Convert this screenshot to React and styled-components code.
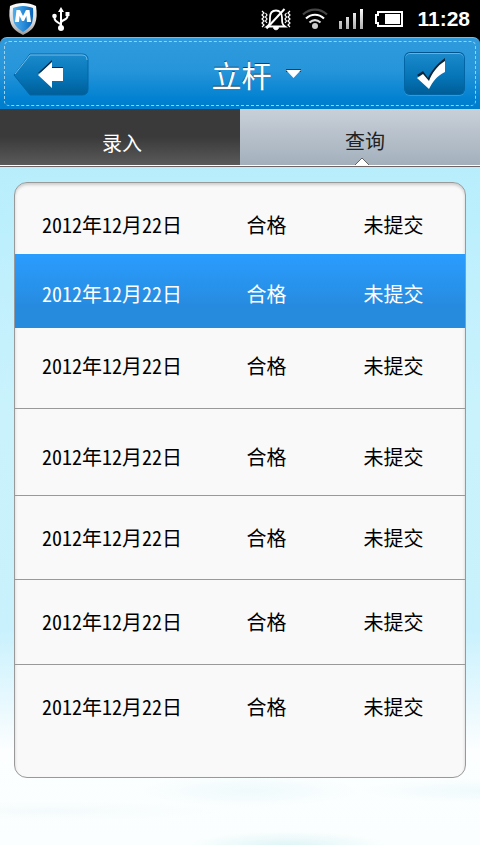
import React, { useState } from "react";
import styled, { createGlobalStyle, css } from "styled-components";

const Global = createGlobalStyle`
  * { box-sizing: border-box; }
  html { height: 100%; }
  body { margin: 0; min-height: 100%; background: #000; }
  body, button, select {
    font-family: "Noto Sans CJK SC", "Noto Sans", sans-serif;
  }
`;

const Screen = styled.div`
  min-height: 100vh;
  display: flex;
  flex-direction: column;
`;

const StatusBar = styled.div`
  height: 37px;
  display: flex;
  align-items: center;
  justify-content: space-between;
  padding: 0 10px 0 8px;
  background: #000;
  color: #fff;
`;

const StatusGroup = styled.div`
  display: flex;
  align-items: center;
  gap: ${(p) => p.$gap}px;
`;

const Clock = styled.time`
  font: bold 21px/36px "Liberation Sans", sans-serif;
  padding-left: 3px;
`;

const Header = styled.header`
  height: 72px;
  padding: 3px 4px;
  border-top: 1px solid #74bdea;
  border-radius: 7px 7px 0 0;
  background: linear-gradient(#2f9bdd, #2795da 45%, #0080d0 88%, #007dcd);
`;

const Stitching = styled.div`
  height: 65px;
  display: grid;
  grid-template-columns: 1fr auto 1fr;
  align-items: center;
  padding: 0 10px 0 8px;
  border: 1px dashed #9bd0ef;
  border-radius: 5px;
`;

const BackButton = styled.button`
  width: 77px;
  height: 44px;
  padding: 0;
  border: 0;
  background: none;
  cursor: pointer;
  svg { display: block; }
`;

const ConfirmButton = styled.button`
  justify-self: end;
  width: 61px;
  height: 43px;
  padding: 0 0 0 12px;
  border: 1px solid #0066a6;
  border-top-color: #00568c;
  border-radius: 6px;
  background: linear-gradient(#1c8acb, #0676b9 55%, #005e98);
  box-shadow: inset 0 1px 0 #62b2e2, 0 1px 0 #2d9bdd;
  cursor: pointer;
  svg { display: block; }
`;

const TitleButton = styled.button`
  display: flex;
  align-items: center;
  gap: 14px;
  padding: 0 0 0 34px;
  border: 0;
  background: none;
  color: #fff;
  font-size: 30px;
  line-height: 40px;
  text-shadow: 0 -1px 0 #17435f;
  cursor: pointer;
`;

const Tabs = styled.nav`
  height: 58px;
  display: grid;
  grid-template-columns: 1fr 1fr;
  border-bottom: 1px solid #6f6365;
  background: #fff;
  padding-bottom: 1px;
`;

const Tab = styled.button`
  position: relative;
  border: 0;
  font-size: 20px;
  line-height: 28px;
  cursor: pointer;
  ${(p) =>
    p.$active
      ? css`
          padding: 8px 0 0 10px;
          color: #222;
          background: linear-gradient(#c9d0d8, #a3b0bc);
        `
      : css`
          padding: 12px 0 0 4px;
          color: #fff;
          background: linear-gradient(#3a3a3a 50%, #5a5a5a);
        `}
`;

const Pointer = styled.svg`
  position: absolute;
  left: calc(50% - 5px);
  bottom: 0;
`;

const Content = styled.main`
  flex: 1;
  padding: 15px 14px 60px;
  background:
    radial-gradient(ellipse 110px 16px at 52% 92%, #effafc, transparent),
    radial-gradient(ellipse 120px 12px at 100% 92%, #effafc, transparent),
    radial-gradient(ellipse 170px 10px at 10% 95%, #f4fbfc, transparent),
    radial-gradient(ellipse 100px 14px at 60% 100%, #e0f5f7, transparent),
    linear-gradient(#b8eefc, #c9f2fc 35%, #c8f1fd 68%, #e2f7fe 77%, #fcfeff 86%, #fbfefe);
`;

const Panel = styled.section`
  overflow: hidden;
  border: 1px solid #999;
  border-radius: 13px;
  background: #f9f9f9;
  box-shadow: inset 0 2px 3px #ccc;
`;

const Records = styled.table`
  width: 100%;
  table-layout: fixed;
  border-collapse: separate;
  border-spacing: 0;
  font-size: 20px;
  line-height: 28px;
  font-feature-settings: "hwid";
`;

const Cell = styled.td`
  width: ${(p) => p.$width};
  padding: 0 0 0 2px;
  vertical-align: top;
  white-space: nowrap;
  &:first-child { padding-left: 27px; }
`;

const Row = styled.tr`
  height: ${(p) => p.$height}px;
  color: ${(p) => (p.$selected ? "#fff" : "#000")};
  background: ${(p) => (p.$selected ? "linear-gradient(#2a9dff, #268add 75%)" : "none")};
  ${Cell} {
    padding-top: ${(p) => p.$lead}px;
    border-bottom: ${(p) => (p.$ruled ? "1px solid #999" : "0")};
  }
`;

const records = [
  { height: 71, lead: 28 },
  { height: 74, lead: 26 },
  { height: 81, lead: 24, ruled: true },
  { height: 87, lead: 34, ruled: true },
  { height: 84, lead: 28, ruled: true },
  { height: 85, lead: 28, ruled: true },
  { height: 112, lead: 28 },
].map((r) => ({ ...r, date: "2012年12月22日", result: "合格", state: "未提交" }));

const ShieldIcon = () => (
  <svg width="30" height="33" viewBox="0 0 30 33" aria-hidden="true">
    <defs>
      <linearGradient id="rim" x2="0" y2="1">
        <stop stopColor="#fff" />
        <stop offset=".6" stopColor="#d8d8d8" />
        <stop offset="1" stopColor="#999" />
      </linearGradient>
      <linearGradient id="core" x2="1" y2="0">
        <stop stopColor="#55afe9" />
        <stop offset=".5" stopColor="#2a8fdc" />
        <stop offset="1" stopColor="#0a62b8" />
      </linearGradient>
    </defs>
    <path d="M15 1C10 1 6 2 2 4c-1 7-1 13 1 18 2 5 6 8 12 11 6-3 10-6 12-11 2-5 2-11 1-18-4-2-8-3-13-3Z" fill="url(#rim)" />
    <path d="M15 4c-4 0-7 1-10 2-.5 6 0 11 1 15 2 4 5 6 9 9 4-3 7-5 9-9 1-4 1.500-9 1-15-3-1-6-2-10-2Z" fill="url(#core)" />
    <path d="M7 20 8.500 8H12l3 6 3-6h3.500L23 20h-4l-.6-6-2.400 5h-2l-2.400-5L11 20Z" fill="#fff" />
  </svg>
);

const UsbIcon = () => (
  <svg width="20" height="26" viewBox="0 0 20 26" fill="none" stroke="#fff" strokeWidth="2" aria-hidden="true">
    <path d="M10 4v18M10 19.500C10 16 3.500 17 3.500 12V10M10 17c0-3.500 6.500-2.500 6.500-7V8" />
    <path d="m10 1 3 5H7Z" fill="#fff" stroke="none" />
    <circle cx="10" cy="22" r="3" fill="#fff" stroke="none" />
    <circle cx="3.500" cy="10" r="2.300" fill="#fff" stroke="none" />
    <path d="M14.500 6h4v4h-4Z" fill="#fff" stroke="none" />
  </svg>
);

const SilentIcon = () => (
  <svg width="30" height="24" viewBox="0 0 30 24" fill="none" stroke="#fff" aria-hidden="true">
    <path d="M6 19.500h18c-3-2-3-4-3-9 0-4-2-7-6-7s-6 3-6 7c0 5 0 7-3 9Z" strokeWidth="1.800" />
    <path d="M12.500 20.500h5c0 3-5 3-5 0Z" fill="#fff" />
    <path d="M5.500 21.500 23.500 2" strokeWidth="2" />
    <path d="m1 4 2 2-2 2 2 2-2 2 2 2-2 2 2 2-2 2M4.500 6l1.500 2-1.500 2L6 12l-1.500 2L6 16M29 4l-2 2 2 2-2 2 2 2-2 2 2 2-2 2 2 2M25.500 6 24 8l1.500 2-1.500 2 1.500 2-1.500 2" strokeWidth="1.200" />
  </svg>
);

const WifiIcon = () => (
  <svg width="26" height="22" viewBox="0 0 26 22" fill="none" strokeWidth="2.200" aria-hidden="true">
    <path d="M1 6.500c7-6.500 17-6.500 24 0" stroke="#454545" />
    <path d="M4 10.500c5.500-5 12.500-5 18 0" stroke="#fff" />
    <path d="M7.500 14.500c3.500-3 7.500-3 11 0" stroke="#ddd" />
    <circle cx="13" cy="18" r="3" fill="#ccc" />
  </svg>
);

const SignalIcon = () => (
  <svg width="25" height="22" viewBox="0 0 25 22" aria-hidden="true">
    <defs>
      <linearGradient id="bar" gradientUnits="userSpaceOnUse" x1="0" y1="0" x2="0" y2="22">
        <stop stopColor="#fff" />
        <stop offset="1" stopColor="#aaa" />
      </linearGradient>
    </defs>
    <path d="M0 13h3v8H0ZM7 9h3v12H7ZM14 5h3v16h-3ZM21 1h3v20h-3Z" fill="url(#bar)" />
  </svg>
);

const BatteryIcon = () => (
  <svg width="28" height="16" viewBox="0 0 28 16" aria-hidden="true">
    <path d="M3 1h24v14H3v-3H1V4h2Z" fill="none" stroke="#fff" strokeWidth="2" />
    <path d="M10 3h15v10H10Z" fill="#fff" />
  </svg>
);

const BackIcon = () => (
  <svg width="77" height="44" viewBox="0 0 77 44" aria-hidden="true">
    <defs>
      <linearGradient id="back" x2="0" y2="1">
        <stop stopColor="#1c8acb" />
        <stop offset=".55" stopColor="#0676b9" />
        <stop offset="1" stopColor="#005e98" />
      </linearGradient>
    </defs>
    <path d="M17 2h52q6 0 6 6v29q0 6-6 6H17L1 23Z" fill="url(#back)" stroke="#0066a6" />
    <path d="M2 22 17 3h52q5 0 5 5" fill="none" stroke="#72bce7" />
    <path d="M25 21 39 8v7h11v3H39Z" fill="#07263a" />
    <path d="m25 23 14-13v6h11v13H39v7Z" fill="#fff" />
  </svg>
);

const CheckIcon = () => (
  <svg width="28" height="32" viewBox="2 0 28 32" aria-hidden="true">
    <path d="m2 17 6-4 5 7C17 12 22 6 30 0v4L14 28Z" fill="#07263a" />
    <path d="m2 20 6-4 6 7C17 15 22 8 30 3v11c-8 4-12 9-16 17Z" fill="#fff" />
  </svg>
);

const CaretIcon = () => (
  <svg width="15" height="10" viewBox="0 0 15 10" aria-hidden="true">
    <path d="M0 0h15v3H0Z" fill="#17435f" />
    <path d="M0 1h15L7.500 9Z" fill="#fff" />
  </svg>
);

export default function App() {
  const [tab, setTab] = useState("查询");
  const [selected, setSelected] = useState(1);

  return (
    <Screen>
      <Global />
      <StatusBar>
        <StatusGroup $gap={13}>
          <ShieldIcon />
          <UsbIcon />
        </StatusGroup>
        <StatusGroup $gap={11}>
          <SilentIcon />
          <WifiIcon />
          <SignalIcon />
          <BatteryIcon />
          <Clock>11:28</Clock>
        </StatusGroup>
      </StatusBar>
      <Header>
        <Stitching>
          <BackButton type="button" aria-label="返回"><BackIcon /></BackButton>
          <TitleButton type="button">立杆<CaretIcon /></TitleButton>
          <ConfirmButton type="button" aria-label="确认"><CheckIcon /></ConfirmButton>
        </Stitching>
      </Header>
      <Tabs>
        {["录入", "查询"].map((name) => (
          <Tab key={name} type="button" $active={name === tab} onClick={() => setTab(name)}>
            {name}
            {name === tab && (
              <Pointer width="14" height="8" viewBox="0 0 14 8" aria-hidden="true">
                <path d="M0 8 7 1l7 7Z" fill="#fff" stroke="#666" />
                <path d="M1 8h12" stroke="#fff" strokeWidth="2" />
              </Pointer>
            )}
          </Tab>
        ))}
      </Tabs>
      <Content>
        <Panel>
          <Records>
            <tbody>
              {records.map((r, i) => (
                <Row
                  key={i}
                  $height={r.height}
                  $lead={r.lead}
                  $ruled={r.ruled}
                  $selected={i === selected}
                  onClick={() => setSelected(i)}
                >
                  <Cell $width="auto">{r.date}</Cell>
                  <Cell $width="26%">{r.result}</Cell>
                  <Cell $width="23%">{r.state}</Cell>
                </Row>
              ))}
            </tbody>
          </Records>
        </Panel>
      </Content>
    </Screen>
  );
}
